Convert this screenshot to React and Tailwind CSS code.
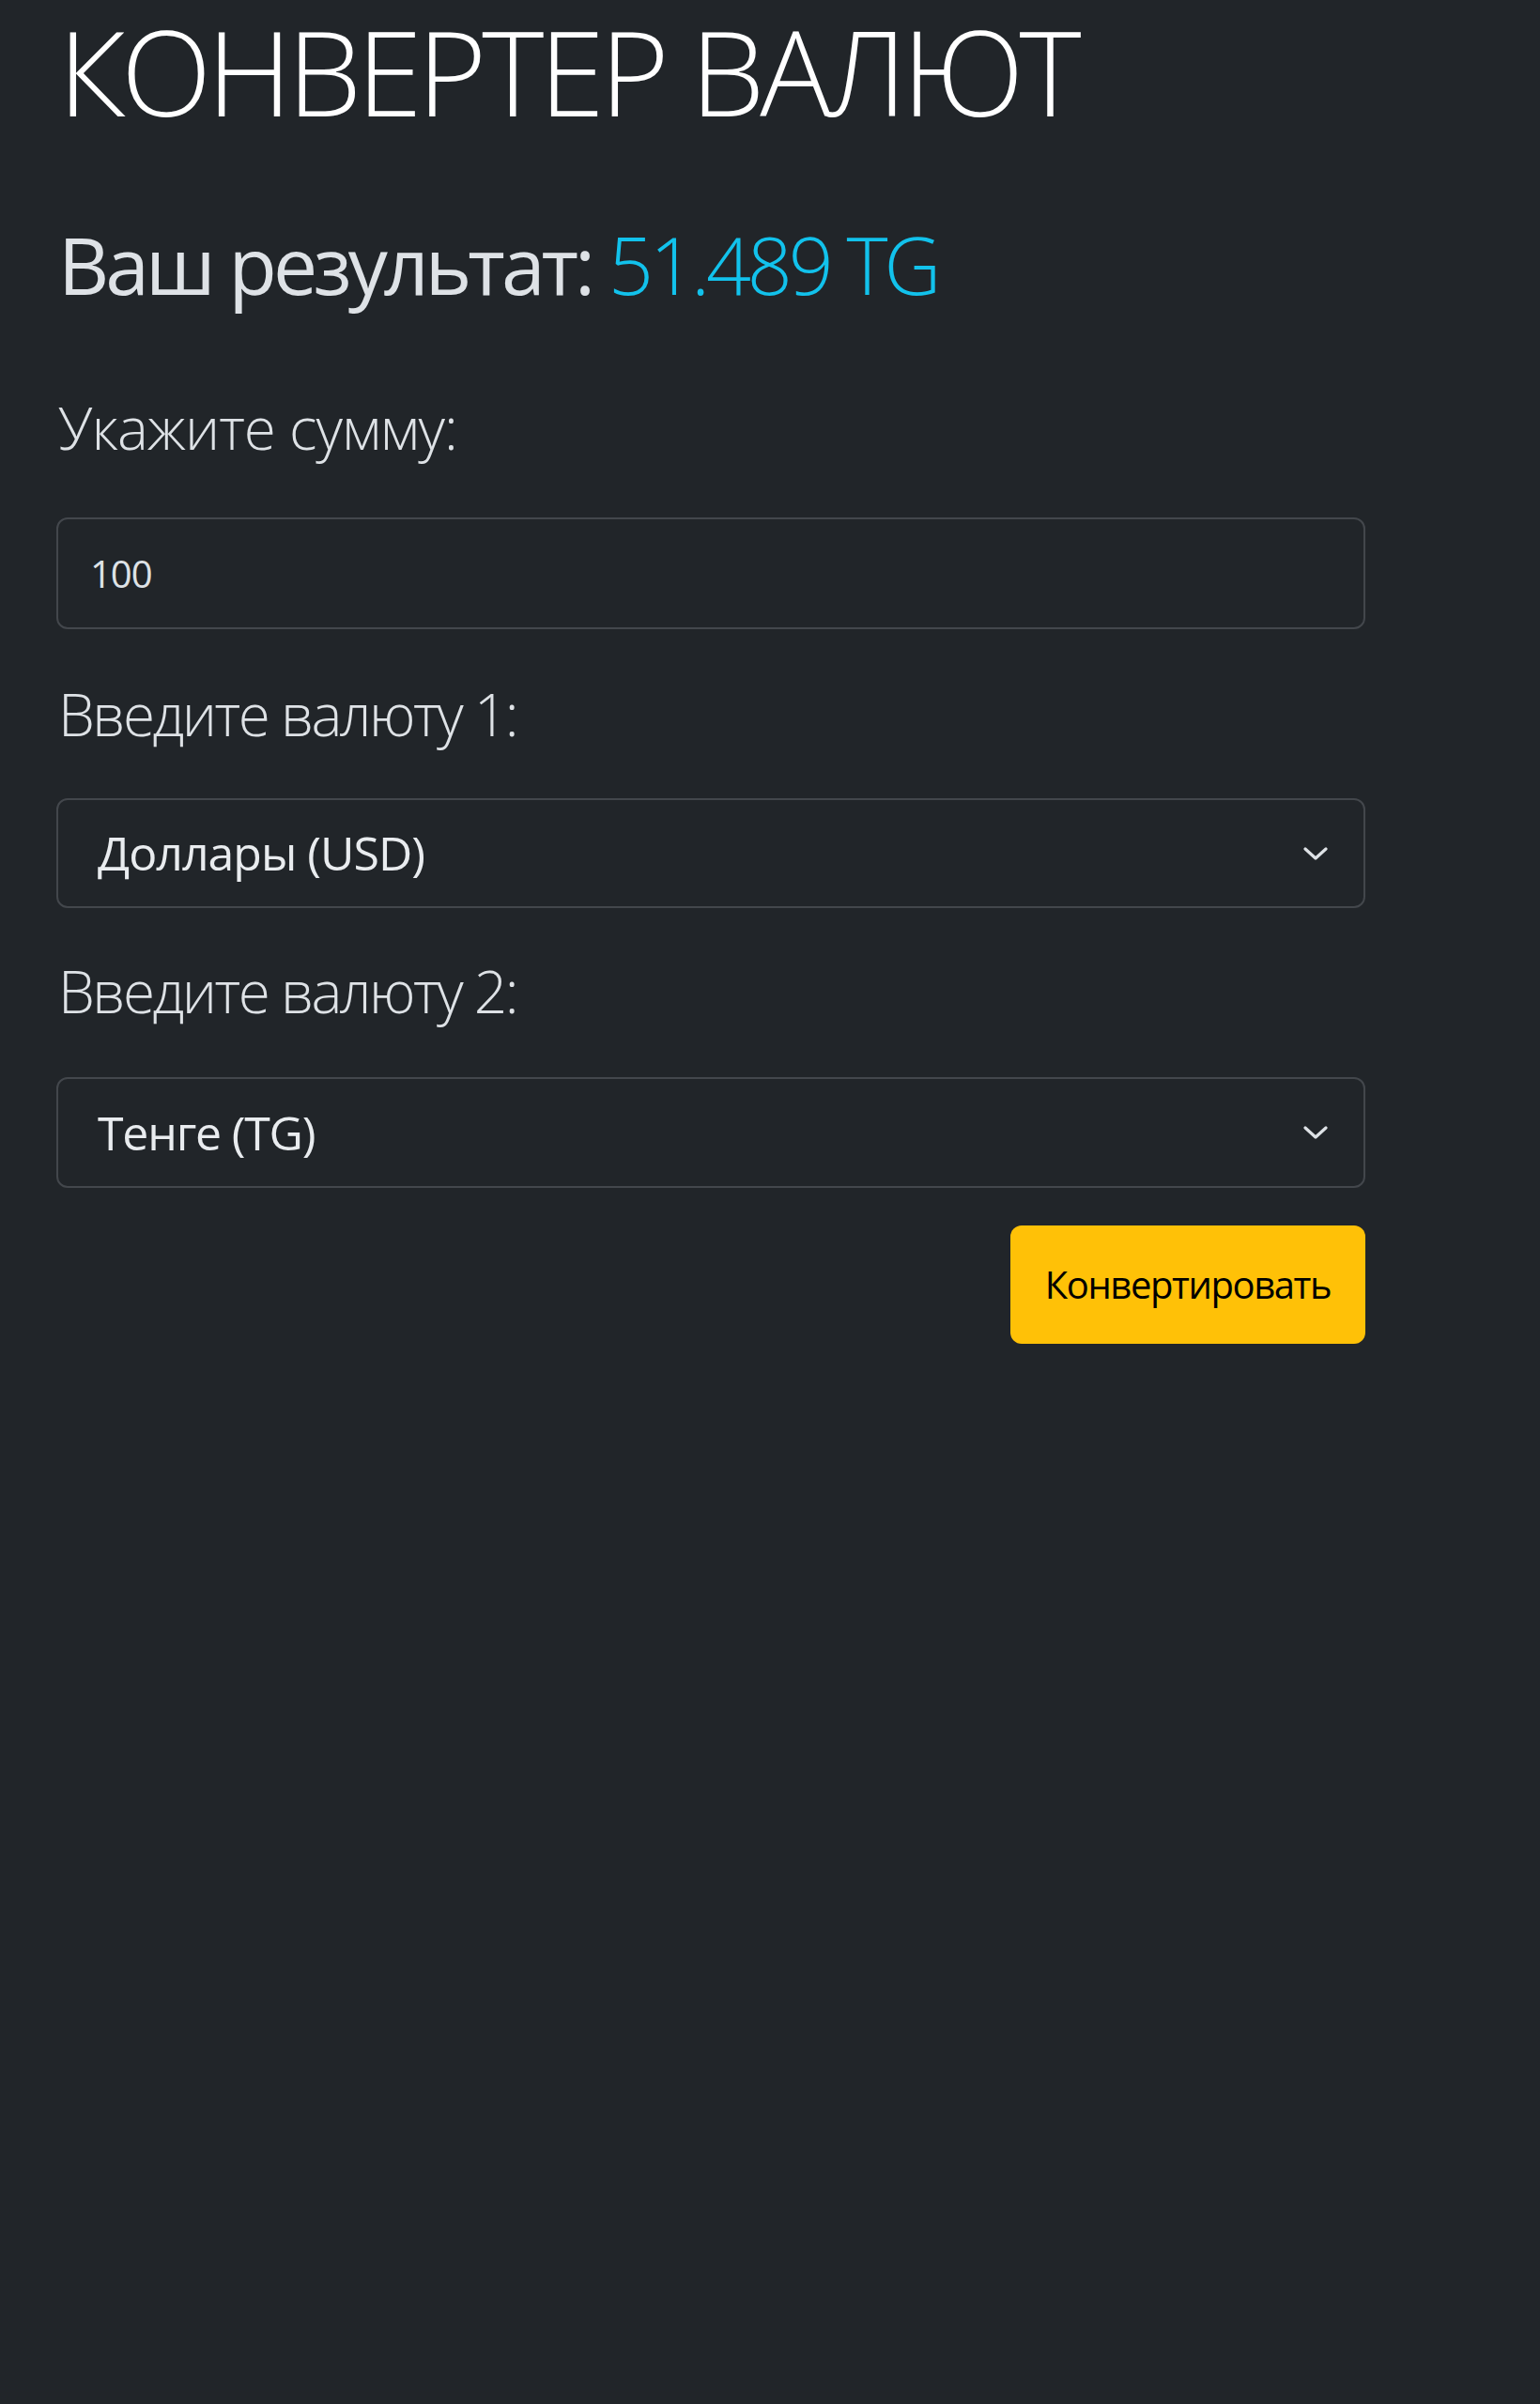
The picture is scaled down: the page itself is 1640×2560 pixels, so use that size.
import React from "react";

function Chevron() {
  return (
    <svg width="26" height="16" viewBox="0 0 26 16" fill="none" className="shrink-0">
      <path d="M2 3 L13 13 L24 3" stroke="#dee2e6" strokeWidth="3.2" strokeLinecap="round" strokeLinejoin="round" />
    </svg>
  );
}

export default function App() {
  return (
    <div
      className="min-h-[2560px] w-full bg-[#212529] text-[#dee2e6]"
      style={{ fontFamily: '"Open Sans", "Noto Sans", sans-serif' }}
    >
      <div className="ml-[60px] w-[1394px] flex flex-col">
        <h1 className="text-[126px] leading-[150px] font-light text-white ml-[2px] pr-[20px] whitespace-nowrap tracking-[-5px]">
          КОНВЕРТЕР ВАЛЮТ
        </h1>
        <div className="mt-[90px] text-[84px] leading-[84px] ml-[2px] whitespace-nowrap tracking-[-4px]">
          <span className="font-normal">Ваш результат: </span>
          <span className="font-light text-[#12c2ec]">51.489 TG</span>
        </div>
        <label className="mt-[100px] text-[62px] leading-[62px] font-light ml-[2px] tracking-[-1px]">Укажите сумму:</label>
        <div className="mt-[65px] h-[119px] rounded-[12px] border-2 border-[#43474c] flex items-center pl-[34px] text-[40px] text-[#dee2e6] tracking-[-1px]">
          100
        </div>
        <label className="mt-[59px] text-[62px] leading-[62px] font-light ml-[2px] tracking-[-2.5px]">Введите валюту 1:</label>
        <div className="mt-[59px] h-[117px] rounded-[12px] border-2 border-[#43474c] flex items-center justify-between pl-[42px] pr-[38px] text-[50px] text-[#e9ecef] tracking-[-1px]">
          <span>Доллары (USD)</span>
          <Chevron />
        </div>
        <label className="mt-[57px] text-[62px] leading-[62px] font-light ml-[2px] tracking-[-2.5px]">Введите валюту 2:</label>
        <div className="mt-[61px] h-[118px] rounded-[12px] border-2 border-[#43474c] flex items-center justify-between pl-[42px] pr-[38px] text-[50px] text-[#e9ecef] tracking-[-1.2px]">
          <span>Тенге (TG)</span>
          <Chevron />
        </div>
        <div className="mt-[40px] flex justify-end">
          <button className="h-[126px] w-[378px] rounded-[12px] bg-[#ffc107] text-black text-[40px] tracking-[-1.4px] flex items-center justify-center">
            Конвертировать
          </button>
        </div>
      </div>
    </div>
  );
}
